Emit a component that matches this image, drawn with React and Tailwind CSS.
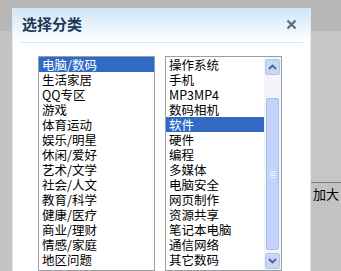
import React from 'react';

const leftItems = ['电脑/数码', '生活家居', 'QQ专区', '游戏', '体育运动', '娱乐/明星', '休闲/爱好', '艺术/文学', '社会/人文', '教育/科学', '健康/医疗', '商业/理财', '情感/家庭', '地区问题'];
const rightItems = ['操作系统', '手机', 'MP3MP4', '数码相机', '软件', '硬件', '编程', '多媒体', '电脑安全', '网页制作', '资源共享', '笔记本电脑', '通信网络', '其它数码'];

const font = { fontFamily: '"SimSun", "Noto Sans CJK SC", sans-serif' };

const Item = ({ label, selected }) => (
  <div
    className={`h-[15px] leading-[15px] pl-[3px] text-[12.5px] whitespace-nowrap ${selected ? 'bg-[#316ac5] text-white' : 'text-black'}`}
  >
    {label}
  </div>
);

const Chevron = ({ up }) => (
  <svg width="9" height="6" viewBox="0 0 9 6">
    <path d={up ? 'M1 5 L4.5 1.5 L8 5' : 'M1 1 L4.5 4.5 L8 1'} fill="none" stroke="#4d6185" strokeWidth="1.8" />
  </svg>
);

const Scrollbar = () => (
  <div className="w-[17px] bg-[#f3f5fa] flex flex-col items-center pt-[2px] pb-[1px]">
    <div className="w-[15px] h-[16px] rounded-[2px] bg-[#c8d6f9] border border-[#b3c4ee] flex items-center justify-center">
      <Chevron up />
    </div>
    <div className="flex-1 w-full flex flex-col items-center pt-[23px] pb-[3px]">
      <div className="w-[13px] flex-1 rounded-[2px] bg-[#c3d3fb] border border-[#a9bcea] flex flex-col items-center justify-center gap-[1px]">
        <div className="w-[6px] h-px bg-[#eef2fd]" />
        <div className="w-[6px] h-px bg-[#eef2fd]" />
        <div className="w-[6px] h-px bg-[#eef2fd]" />
        <div className="w-[6px] h-px bg-[#eef2fd]" />
      </div>
    </div>
    <div className="w-[15px] h-[16px] rounded-[2px] bg-[#c8d6f9] border border-[#b3c4ee] flex items-center justify-center">
      <Chevron />
    </div>
  </div>
);

export default function App() {
  return (
    <div className="w-[341px] h-[271px] flex overflow-hidden bg-[#c2c2c2]" style={font}>
      <div className="w-[12px] flex flex-col">
        <div className="h-[31px] bg-[#b7b7b7]" />
        <div className="flex-1 bg-[#c3c3c3]" />
      </div>

      <div className="w-[299px] flex flex-col">
        <div className="h-[8px] bg-[#b7b7b7]" />
        <div className="flex-1 bg-white border-l border-r border-[#dfeaf3] flex flex-col">
          <div className="h-[34px] bg-gradient-to-b from-[#cfe5f7] to-white flex items-center justify-between pl-[9px] pr-[13px] pb-[2px]">
            <span className="text-[15px] font-bold text-[#1b3a57]" style={{ fontFamily: '"Noto Sans CJK SC", sans-serif' }}>选择分类</span>
            <svg width="11" height="11" viewBox="0 0 11 11">
              <path d="M1.5 1.5 L9.5 9.5 M9.5 1.5 L1.5 9.5" stroke="#5b6b7b" strokeWidth="2.2" />
            </svg>
          </div>
          <div className="mx-[7px] h-px bg-[#dde3e8]" />
          <div className="flex gap-[10px] pl-[25px] pt-[13px]">
            <div className="w-[117px] h-[215px] border border-[#9a9fa4] bg-white">
              {leftItems.map((t, i) => (
                <Item key={t} label={t} selected={i === 0} />
              ))}
            </div>
            <div className="w-[117px] h-[215px] border border-[#9a9fa4] bg-white flex">
              <div className="flex-1">
                {rightItems.map((t, i) => (
                  <Item key={t} label={t} selected={i === 4} />
                ))}
              </div>
              <Scrollbar />
            </div>
          </div>
        </div>
      </div>

      <div className="w-[30px] flex flex-col">
        <div className="h-[31px] bg-[#b7b7b7]" />
        <div className="h-[151px] bg-[#c6c6c6]" />
        <div className="h-px bg-[#7c7c7c]" />
        <div className="flex-1 bg-[#c2c2c2] pl-[2px] pt-[3px] text-[13px] leading-[16px] text-black">加大</div>
      </div>
    </div>
  );
}
